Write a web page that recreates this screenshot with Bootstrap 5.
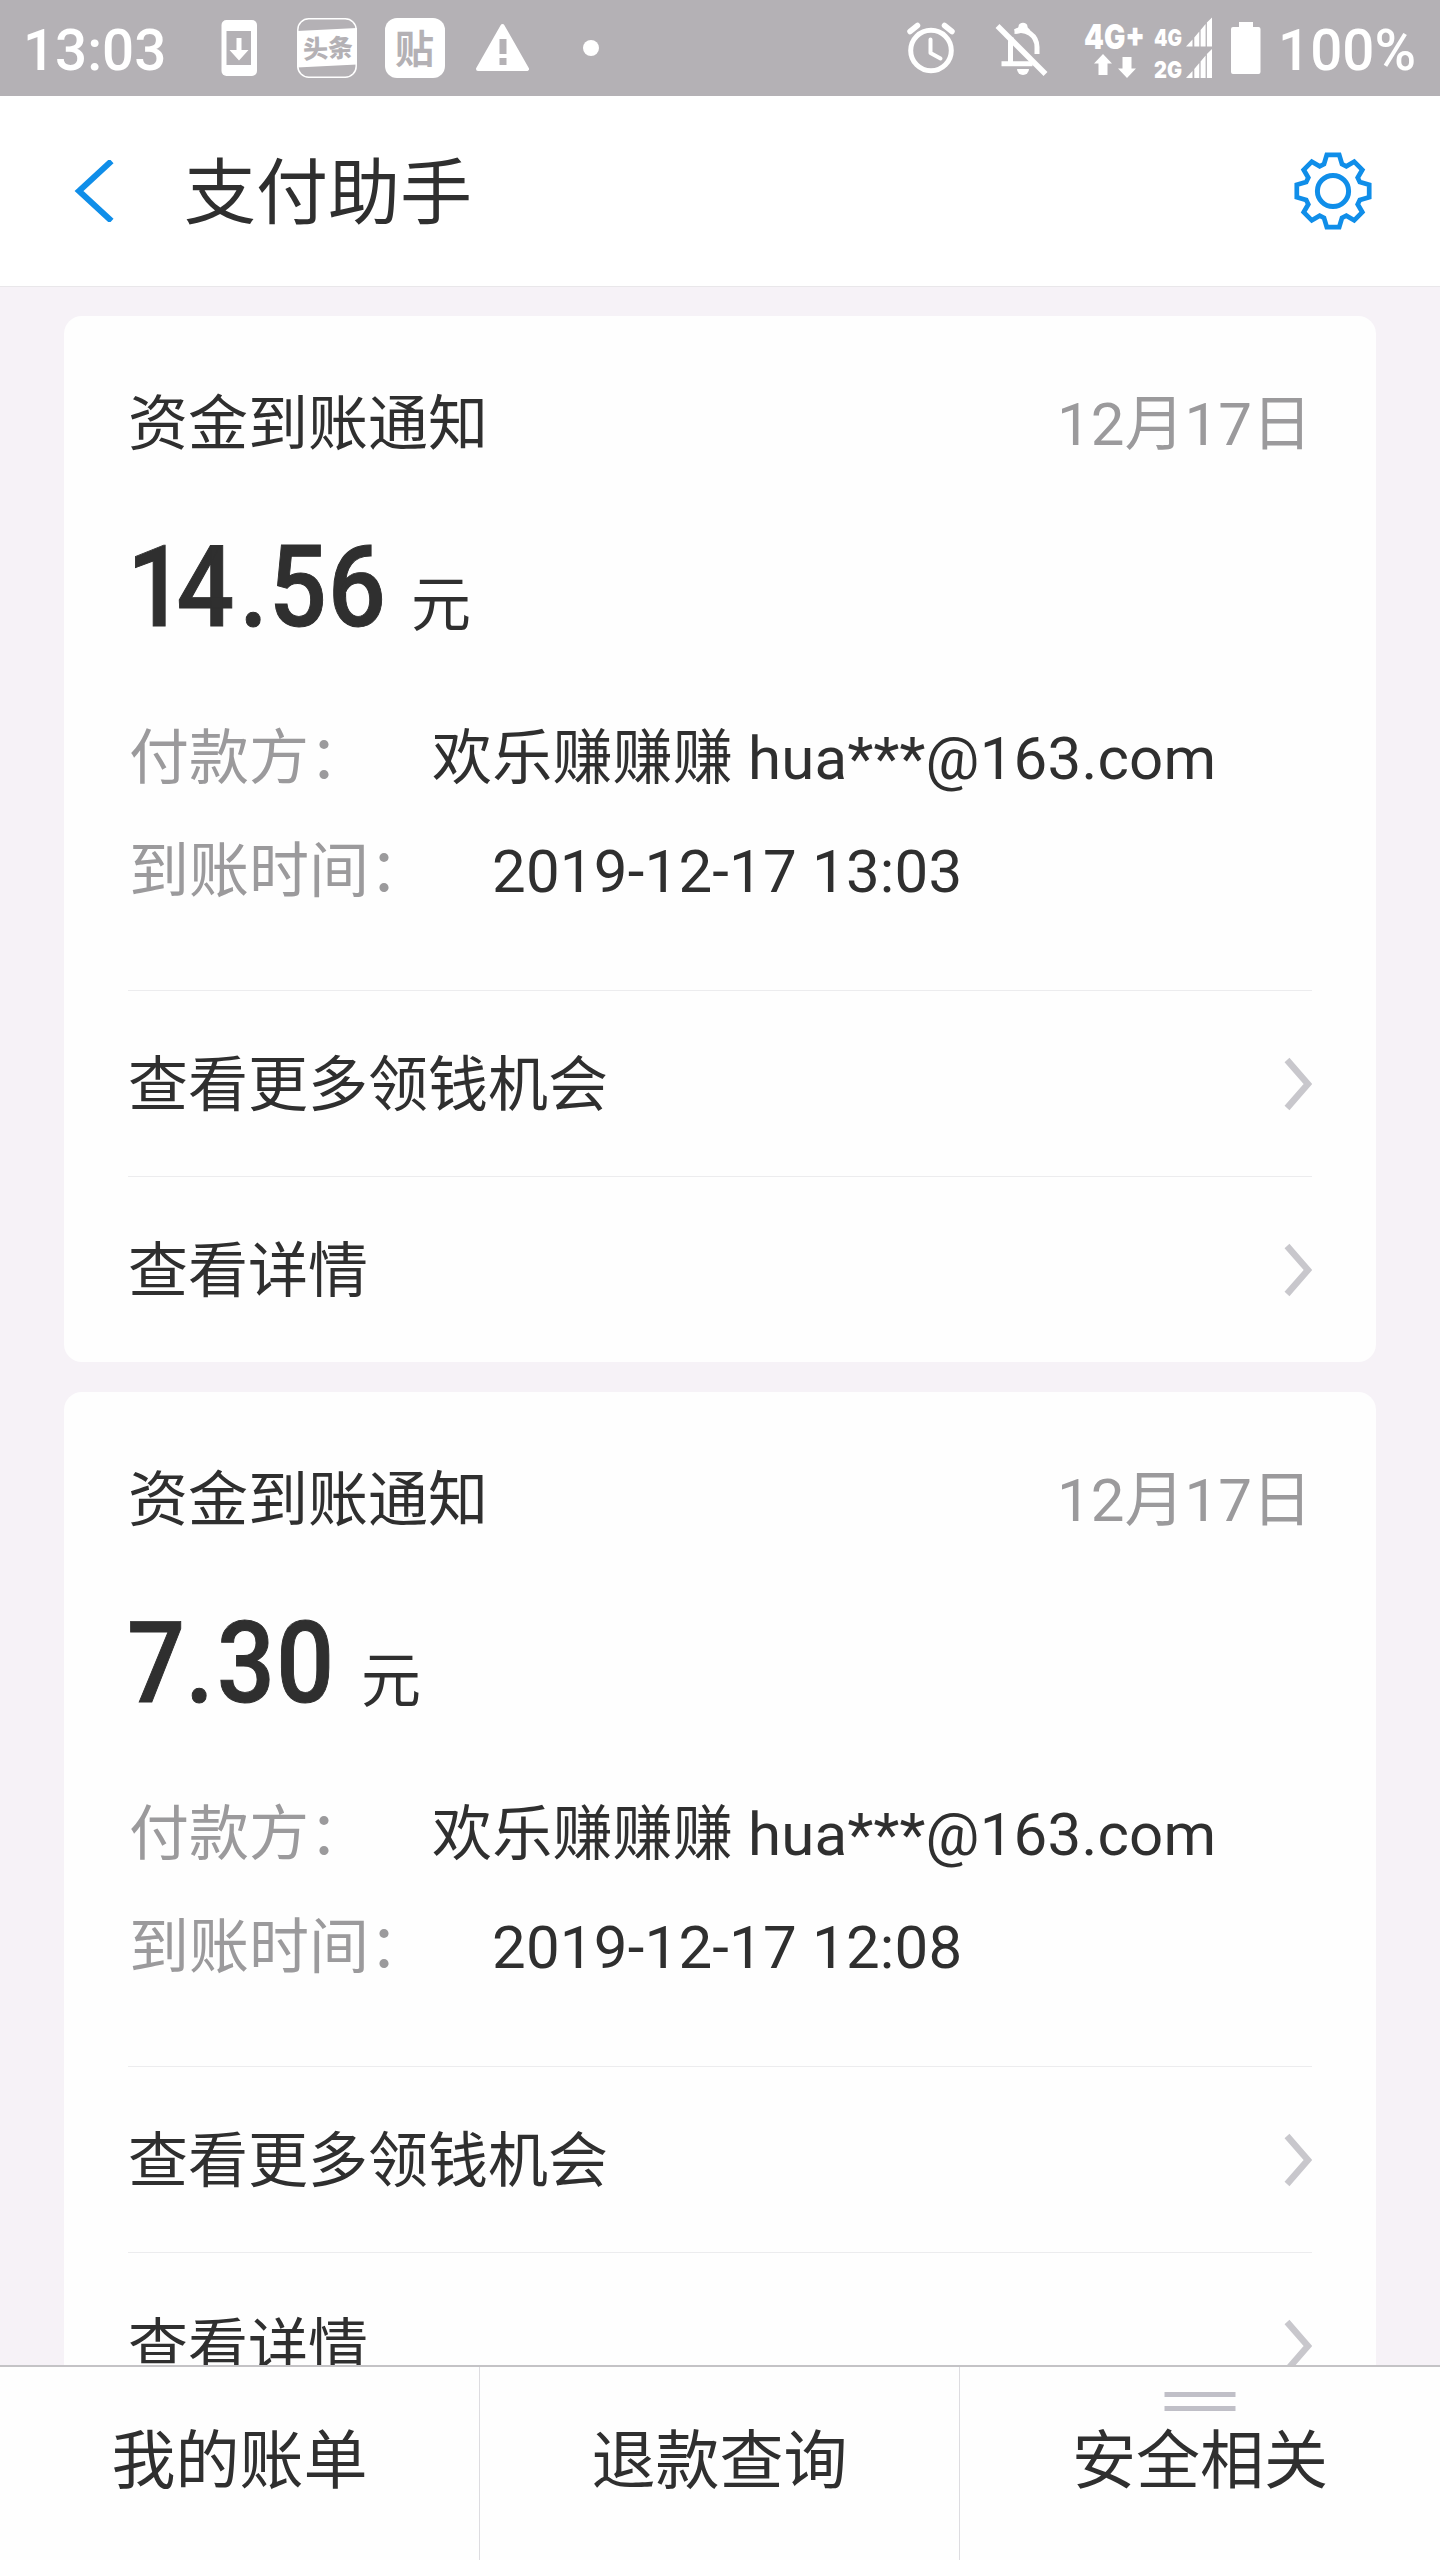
<!DOCTYPE html>
<html lang="zh-CN">
<head>
<meta charset="utf-8">
<meta name="viewport" content="width=device-width, initial-scale=1">
<title>支付助手</title>
<link href="https://cdn.jsdelivr.net/npm/bootstrap@5.3.0/dist/css/bootstrap.min.css" rel="stylesheet">
<style>
  body { height: 2560px; background: #f6f2f7; color: #2f2f2f; font-family: Roboto, "Noto Sans CJK SC", sans-serif; font-size: 60px; line-height: 60px; }
  svg { display: block; flex: none; }
  .status-bar { height: 96px; flex: none; background: #b4b1b5; color: #fff; font-size: 56.500px; font-weight: 500; line-height: 96px; padding: 0 24px 0 23px; }
  .status-bar .clock { width: 198px; padding-top: 5px; }
  .status-bar .percent { width: 139px; padding-top: 5px; text-align: right; white-space: nowrap; }
  .title-bar { height: 191px; flex: none; border-bottom: 1px solid #e9e7ea; padding: 0 67px 1px 73px; }
  .title-bar h1 { font-size: 72px; line-height: 72px; padding-top: 7px; margin-left: 67px; font-weight: 400; }
  .feed { min-height: 0; padding: 29px 64px 0; gap: 30px; }
  .notice { height: 1046px; flex: none; border: 0; border-radius: 18px; padding: 79px 64px 0; color: inherit; background: #fefefe; }
  .notice h2 { font-size: 60px; line-height: 60px; font-weight: 400; }
  .muted-ink { color: #9b9a9c; }
  .amount-row { height: 90px; margin-top: 90px; }
  .amount-row .figure { font-size: 113px; font-weight: 500; fill: #2f2f2f; stroke: #2f2f2f; stroke-width: 1px; }
  .amount-row .unit { font-size: 60px; fill: #2f2f2f; }
  .fact { height: 60px; gap: 63px; padding-left: 1px; }
  .fact + .fact { margin-top: 53px; }
  .fact span + span { letter-spacing: .2px; }
  .facts { margin-top: 94px; }
  .links { margin-top: 88px; }
  .link-row { height: 186px; border-top: 1px solid #ececee; }
  .link-row span { padding: 5px 0 0 0; }
  .tabs-bar { height: 195px; background: #fefefe; border-top: 2px solid #c4c3c6; font-size: 64px; line-height: 64px; }
  .tabs-bar .tab-cell { padding-top: 63px; border-right: 1px solid #dddce0; }
  .tabs-bar .tab-cell:last-child { border-right: 0; }
  .handle { width: 71px; height: 19px; top: 25px; border: solid #c0bfc7; border-width: 5px 0; }
</style>
</head>
<body class="d-flex flex-column overflow-hidden">
  <header class="status-bar d-flex align-items-center justify-content-between">
    <div class="d-flex align-items-center">
      <span class="clock">13:03</span>
      <!-- notification icons -->
      <svg width="400" height="96" viewBox="221 0 400 96">
        <rect x="221.500" y="20" width="35.500" height="56" rx="5" fill="#fff"/>
        <rect x="226.500" y="31" width="24.500" height="34" fill="#b4b1b5"/>
        <path d="M236.500 38h5v12h7l-9.500 10.500L229.500 50h7z" fill="#fff"/>
        <rect x="297.800" y="18.800" width="58.400" height="58.400" rx="11" fill="none" stroke="#fff" stroke-width="1.500"/>
        <path d="M297 31l60-3v36.500l-60 3z" fill="#fff"/>
        <text x="303" y="57.500" font-size="25" font-weight="900" fill="#b4b1b5" transform="rotate(-3 327 48)">头条</text>
        <rect x="385" y="18" width="60" height="60" rx="12" fill="#fff"/>
        <text x="395" y="62.500" font-size="39" font-weight="700" fill="#b4b1b5">贴</text>
        <path d="M502.500 26L527 69H478z" fill="#fff" stroke="#fff" stroke-width="4" stroke-linejoin="round"/>
        <path d="M499.500 39h7v15h-7zM499.500 58h7v7h-7z" fill="#b4b1b5"/>
        <circle cx="591" cy="48" r="8" fill="#fff"/>
      </svg>
    </div>
    <div class="d-flex align-items-center">
      <!-- alarm, muted bell, radio signal, battery -->
      <svg width="372" height="96" viewBox="905 0 372 96" fill="none" stroke="#fff">
        <circle cx="931" cy="50.500" r="20.300" stroke-width="5"/>
        <path d="M930.500 39.500v13.500l10 5.500" stroke-width="4" stroke-linecap="round" stroke-linejoin="round"/>
        <path d="M910 31.500l7.500-6M952 31.500l-7.500-6" stroke-width="5.500" stroke-linecap="round"/>
        <path d="M1001.500 63.700h31M1010.500 63V42c0-2 .5-3.500 1-5" stroke-width="5"/>
        <path d="M1015 31.500c11-4 22 4 22 15.500v7" stroke-width="5"/>
        <path d="M1014.500 34v-4c0-1.500 4-1.500 4-3.500 0-5 9-5 9 0 0 2 3 2.500 3 5" fill="#fff" stroke="none"/>
        <path d="M1017 69h12a6 6 0 0 1-12 0z" fill="#fff" stroke="none"/>
        <path d="M997.500 26l48 48" stroke-width="5.500"/>
        <g fill="#fff" stroke="none" font-family="Inter, sans-serif" font-weight="900">
          <text x="1084" y="49" font-size="34" textLength="61" lengthAdjust="spacingAndGlyphs">4G+</text>
          <text x="1154" y="46" font-size="23" textLength="28" lengthAdjust="spacingAndGlyphs">4G</text>
          <text x="1154" y="78" font-size="23" textLength="28" lengthAdjust="spacingAndGlyphs">2G</text>
          <path d="M1103 54l9 9.500h-4.500V75h-9V63.500h-4.500zM1127 78l-9-9.500h4.500V57h9v11.500h4.500z"/>
          <path id="bars" d="M1186 46.500l6.500-7v7zM1194.300 37.500l5-6v15h-5zM1200.600 30l5-6v22.500h-5zM1206.900 22.500l5.100-5v29h-5.100z"/>
          <use href="#bars" y="31.500"/>
          <path d="M1239 22h14v5h5.500a2 2 0 0 1 2 2v43a2 2 0 0 1-2 2H1233a2 2 0 0 1-2-2V29a2 2 0 0 1 2-2h6z"/>
        </g>
      </svg>
      <span class="percent">100%</span>
    </div>
  </header>

  <nav class="title-bar bg-white d-flex align-items-center">
    <svg width="44" height="62" viewBox="0 0 44 62"><path d="M38.500 1L6 31 38.500 61" fill="none" stroke="#108ee9" stroke-width="6"/></svg>
    <h1 class="mb-0 flex-grow-1">支付助手</h1>
    <svg width="80" height="80" viewBox="-40 -40 80 80" fill="none" stroke="#108ee9">
      <path stroke-width="4.700" d="M-6.200-36.200H6.200L9-26.800 13.300-24.700 21.200-29.300 29.300-21.200 24.700-13.300 26.800-9 36.200-6.200V6.200L26.800 9 24.700 13.300 29.300 21.200 21.200 29.300 13.300 24.700 9 26.800 6.200 36.200H-6.200L-9 26.800-13.300 24.700-21.200 29.300-29.300 21.200-24.700 13.300-26.800 9-36.200 6.200V-6.200L-26.800-9-24.700-13.300-29.300-21.200-21.200-29.300-13.300-24.700-9-26.800z"/>
      <circle r="15.600" stroke-width="5"/>
    </svg>
  </nav>

  <main class="feed flex-grow-1 d-flex flex-column overflow-hidden">
    <article class="notice card">
      <div class="d-flex justify-content-between">
        <h2 class="mb-0">资金到账通知</h2>
        <span class="muted-ink">12月17日</span>
      </div>
      <div class="amount-row">
        <svg width="360" height="90" viewBox="128 0 360 90" overflow="visible">
          <text class="figure" transform="scale(.9 1)" y="80.500" x="141 196 266 299 364.500">14.56</text>
          <text class="unit" y="81" x="411">元</text>
        </svg>
      </div>
      <div class="facts">
        <div class="fact d-flex"><span class="muted-ink">付款方：</span><span>欢乐赚赚赚 hua***@163.com</span></div>
        <div class="fact d-flex"><span class="muted-ink">到账时间：</span><span>2019-12-17 13:03</span></div>
      </div>
      <div class="links">
        <div class="link-row d-flex align-items-center justify-content-between"><span>查看更多领钱机会</span>
          <svg width="28" height="54" viewBox="0 0 28 54"><path d="M3 3l21 24L3 51" fill="none" stroke="#c8c7cc" stroke-width="6.500"/></svg></div>
        <div class="link-row d-flex align-items-center justify-content-between"><span>查看详情</span>
          <svg width="28" height="54" viewBox="0 0 28 54"><path d="M3 3l21 24L3 51" fill="none" stroke="#c8c7cc" stroke-width="6.500"/></svg></div>
      </div>
    </article>

    <article class="notice card">
      <div class="d-flex justify-content-between">
        <h2 class="mb-0">资金到账通知</h2>
        <span class="muted-ink">12月17日</span>
      </div>
      <div class="amount-row">
        <svg width="360" height="90" viewBox="128 0 360 90" overflow="visible">
          <text class="figure" transform="scale(.9 1)" y="80.500" x="141.500 206 241 307">7.30</text>
          <text class="unit" y="81" x="361">元</text>
        </svg>
      </div>
      <div class="facts">
        <div class="fact d-flex"><span class="muted-ink">付款方：</span><span>欢乐赚赚赚 hua***@163.com</span></div>
        <div class="fact d-flex"><span class="muted-ink">到账时间：</span><span>2019-12-17 12:08</span></div>
      </div>
      <div class="links">
        <div class="link-row d-flex align-items-center justify-content-between"><span>查看更多领钱机会</span>
          <svg width="28" height="54" viewBox="0 0 28 54"><path d="M3 3l21 24L3 51" fill="none" stroke="#c8c7cc" stroke-width="6.500"/></svg></div>
        <div class="link-row d-flex align-items-center justify-content-between"><span>查看详情</span>
          <svg width="28" height="54" viewBox="0 0 28 54"><path d="M3 3l21 24L3 51" fill="none" stroke="#c8c7cc" stroke-width="6.500"/></svg></div>
      </div>
    </article>
  </main>

  <footer class="tabs-bar d-flex text-center flex-shrink-0">
    <div class="tab-cell col-4">我的账单</div>
    <div class="tab-cell col-4">退款查询</div>
    <div class="tab-cell col-4 position-relative"><i class="handle position-absolute start-50 translate-middle-x"></i>安全相关</div>
  </footer>
<script src="https://cdn.jsdelivr.net/npm/bootstrap@5.3.0/dist/js/bootstrap.bundle.min.js"></script>
</body>
</html>
